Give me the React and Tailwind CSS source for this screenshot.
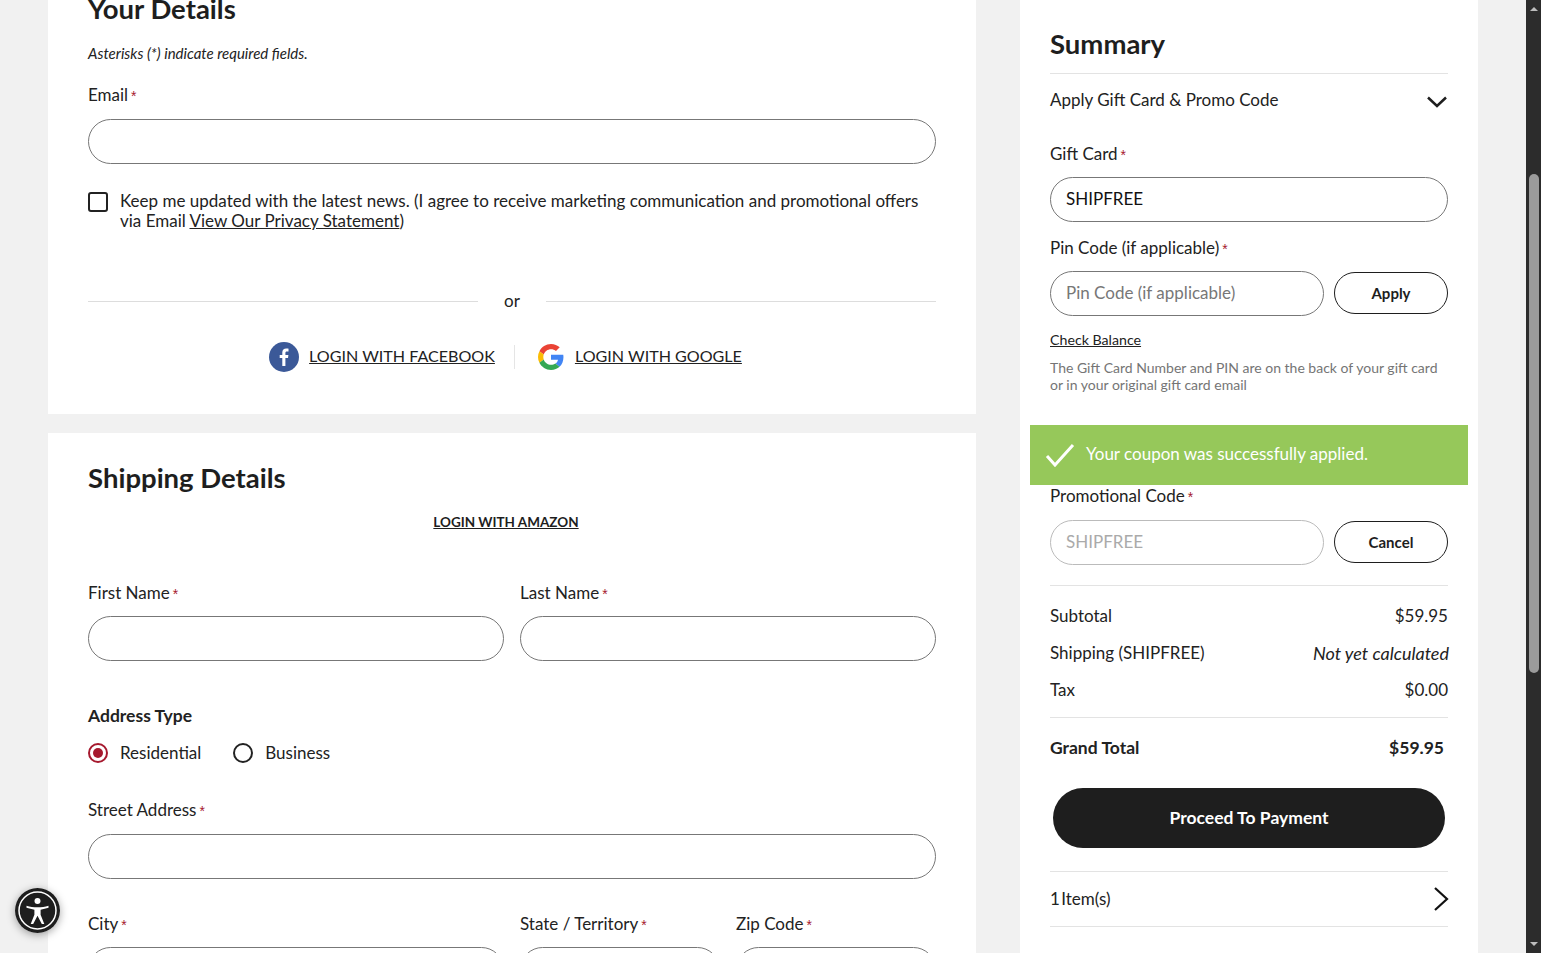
import React from 'react';

const Label = ({ children, className = '' }) => (
  <label className={`block h-6 text-[17px] leading-6 text-[#222] ${className}`}>
    {children}
    <span className="ml-[3px] font-['Liberation_Sans',sans-serif] text-[14px] text-[#a6192e]">*</span>
  </label>
);

const Input = ({ value = '', placeholder = '', className = '' }) => (
  <input
    readOnly
    value={value}
    placeholder={placeholder}
    className={`block h-[45px] w-full rounded-[23px] border border-[#777] bg-white px-[15px] pb-[2px] text-[17px] text-[#222] placeholder:text-[#777] outline-none ${className}`}
  />
);

const Row = ({ label, children, className = '' }) => (
  <div className={`flex h-[37px] items-center justify-between pb-px text-[17px] text-[#222] ${className}`}>
    <span>{label}</span>
    {children}
  </div>
);

const FacebookIcon = () => (
  <svg width="30" height="30" viewBox="0 0 30 30" className="shrink-0">
    <circle cx="15" cy="15" r="15" fill="#3b5998" />
    <path d="M16.4 24v-8h2.6l.4-3.1h-3v-1.900c0-.9.3-1.500 1.500-1.500h1.600V6.700c-.3 0-1.200-.1-2.300-.1-2.300 0-3.900 1.400-3.900 4v2.300h-2.600V16h2.600v8z" fill="#fff" />
  </svg>
);

const GoogleIcon = () => (
  <svg width="26" height="26" viewBox="0 0 48 48" className="shrink-0">
    <path fill="#EA4335" d="M24 9.500c3.500 0 6.700 1.200 9.200 3.600l6.900-6.900C35.900 2.400 30.500 0 24 0 14.600 0 6.500 5.400 2.600 13.200l8 6.200C12.500 13.600 17.800 9.500 24 9.500z" />
    <path fill="#4285F4" d="M47 24.500c0-1.600-.1-3.100-.4-4.500H24v9h12.900c-.6 3-2.200 5.500-4.800 7.200l7.700 6c4.500-4.200 7.200-10.300 7.200-17.700z" />
    <path fill="#FBBC05" d="M10.600 28.600c-.5-1.400-.8-3-.8-4.600s.3-3.200.8-4.600l-8-6.200C.9 16.500 0 20.100 0 24s.9 7.500 2.600 10.800l8-6.200z" />
    <path fill="#34A853" d="M24 48c6.500 0 11.900-2.100 15.800-5.800l-7.700-6c-2.100 1.400-4.900 2.300-8.100 2.300-6.200 0-11.500-4.100-13.400-9.900l-8 6.200C6.500 42.600 14.600 48 24 48z" />
  </svg>
);

const AccessibilityBadge = () => (
  <div className="absolute left-[15px] top-[888px] h-[45px] w-[45px] rounded-full shadow-[0_2px_8px_rgba(0,0,0,0.35)]">
    <svg width="45" height="45" viewBox="0 0 45 45">
      <circle cx="22.500" cy="22.500" r="22.500" fill="#1e1e1e" />
      <circle cx="22.500" cy="22.500" r="18.500" fill="none" stroke="#fff" strokeWidth="1.500" />
      <circle cx="22.500" cy="13" r="3" fill="#fff" />
      <path d="M11.500 17.800c3.500 1 7 1.500 11 1.500s7.500-.5 11-1.500v1.900l-7.900 2v5l3.700 9.300h-2.500l-4.300-8.300-4.300 8.300h-2.500l3.700-9.300v-5l-7.900-2z" fill="#fff" />
    </svg>
  </div>
);

const Scrollbar = () => (
  <div className="flex w-[15px] shrink-0 flex-col items-center bg-[#2c2c2c]">
    <div className="mt-[7px] h-0 w-0 border-x-[4px] border-b-[4px] border-x-transparent border-b-[#bdbdbd]" />
    <div className="mt-[163px] h-[499px] w-[10px] rounded-[5px] bg-[#9b9b9b]" />
    <div className="mt-[269px] h-0 w-0 border-x-[4px] border-t-[4px] border-x-transparent border-t-[#bdbdbd]" />
  </div>
);

const DetailsPanel = () => (
  <section className="h-[414px] overflow-hidden bg-white px-10">
    <h2 className="-mt-[9px] h-[36px] text-[27.5px] font-bold leading-[36px] text-[#1e1e1e]">Your Details</h2>
    <p className="mt-[16px] h-[20px] text-[15px] italic leading-[20px] text-[#222]">Asterisks (*) indicate required fields.</p>
    <Label className="mt-[20px]">Email</Label>
    <Input className="mt-[12px]" />
    <div className="mt-[27px] flex gap-3">
      <span className="mt-[1px] h-5 w-5 shrink-0 rounded-[3px] border-2 border-[#222]" />
      <p className="text-[17px] leading-5 text-[#222]">
        Keep me updated with the latest news. (I agree to receive marketing communication and promotional offers via Email <a className="underline">View Our Privacy Statement</a>)
      </p>
    </div>
    <div className="mt-[60px] flex h-5 items-center text-[17px] text-[#222]">
      <span className="h-px flex-1 bg-[#ddd]" />
      <span className="w-[68px] text-center">or</span>
      <span className="h-px flex-1 bg-[#ddd]" />
    </div>
    <div className="mt-[31px] flex h-[30px] items-center justify-center pr-[13px] text-[16.1px] text-[#222]">
      <FacebookIcon />
      <a className="mb-[2px] ml-[10px] underline">LOGIN WITH FACEBOOK</a>
      <span className="ml-[19px] mr-[23px] h-6 w-px bg-[#e5e5e5]" />
      <GoogleIcon />
      <a className="mb-[2px] ml-[11px] underline">LOGIN WITH GOOGLE</a>
    </div>
  </section>
);

const ShippingPanel = () => (
  <section className="mt-[19px] flex-1 overflow-hidden bg-white px-10">
    <h2 className="mt-[27px] h-[36px] text-[27.5px] font-bold leading-[36px] text-[#1e1e1e]">Shipping Details</h2>
    <div className="mt-[16px] h-5 pr-[12px] text-center text-[13.5px] font-bold leading-5 text-[#1e1e1e]">
      <a className="underline">LOGIN WITH AMAZON</a>
    </div>
    <div className="mt-[49px] grid grid-cols-2 gap-4">
      <div>
        <Label>First Name</Label>
        <Input className="mt-[11px]" />
      </div>
      <div>
        <Label>Last Name</Label>
        <Input className="mt-[11px]" />
      </div>
    </div>
    <h3 className="mt-[43px] h-6 text-[17.5px] font-bold leading-6 text-[#222]">Address Type</h3>
    <div className="mt-[13px] flex h-6 items-center text-[17px] text-[#222]">
      <span className="flex h-5 w-5 items-center justify-center rounded-full border-2 border-[#a6192e]">
        <span className="h-[10px] w-[10px] rounded-full bg-[#a6192e]" />
      </span>
      <span className="ml-3">Residential</span>
      <span className="ml-[32px] h-5 w-5 rounded-full border-2 border-[#222]" />
      <span className="ml-3">Business</span>
    </div>
    <Label className="mt-[33px]">Street Address</Label>
    <Input className="mt-[12px]" />
    <div className="mt-[33px] grid grid-cols-[416px_200px_200px] gap-4">
      <div>
        <Label>City</Label>
        <Input className="mt-[11px]" />
      </div>
      <div>
        <Label>State / Territory</Label>
        <Input className="mt-[11px]" />
      </div>
      <div>
        <Label>Zip Code</Label>
        <Input className="mt-[11px]" />
      </div>
    </div>
  </section>
);

const SummaryPanel = () => (
  <aside className="ml-[44px] w-[458px] shrink-0 bg-white px-[30px] pt-[26px]">
    <h2 className="h-[36px] text-[27.5px] font-bold leading-[36px] text-[#1e1e1e]">Summary</h2>
    <div className="mt-[11px] h-px bg-[#e3e3e3]" />
    <div className="mt-[14px] flex h-6 items-center justify-between text-[17px] text-[#222]">
      <span>Apply Gift Card &amp; Promo Code</span>
      <svg width="22" height="14" viewBox="0 0 22 14" className="mt-[4px]" fill="none" stroke="#1e1e1e" strokeWidth="2.500">
        <path d="M2 2.500l9 8.500 9-8.500" />
      </svg>
    </div>
    <Label className="mt-[30px]">Gift Card</Label>
    <Input value="SHIPFREE" className="mt-[11px] !text-[#111]" />
    <Label className="mt-[14px]">Pin Code (if applicable)</Label>
    <div className="mt-[11px] flex items-start gap-[10px]">
      <Input placeholder="Pin Code (if applicable)" className="!w-[274px]" />
      <button className="mt-px h-[42px] flex-1 rounded-[21px] border border-[#1e1e1e] bg-white text-[15px] font-bold text-[#1e1e1e]">Apply</button>
    </div>
    <a className="mt-[14px] block h-5 text-[14.2px] leading-5 text-[#222] underline">Check Balance</a>
    <p className="mt-[9px] text-[14px] leading-[17px] text-[#757575]">
      The Gift Card Number and PIN are on the back of your gift card or in your original gift card email
    </p>
    <div className="-mx-5 mt-[32px] flex h-[60px] items-center bg-[#96c85a] pl-[15px] text-[17px] text-white">
      <svg width="30" height="24" viewBox="0 0 30 24" fill="none" stroke="#fff" strokeWidth="3">
        <path d="M2 13l8 9L28 2" />
      </svg>
      <span className="mb-[2px] ml-[11px]">Your coupon was successfully applied.</span>
    </div>
    <Label className="-mt-px">Promotional Code</Label>
    <div className="mt-[12px] flex items-start gap-[10px]">
      <Input placeholder="SHIPFREE" className="!w-[274px] !border-[#bbb] placeholder:!text-[#aaa]" />
      <button className="mt-px h-[42px] flex-1 rounded-[21px] border border-[#1e1e1e] bg-white text-[15px] font-bold text-[#1e1e1e]">Cancel</button>
    </div>
    <div className="mt-[20px] h-px bg-[#e3e3e3]" />
    <Row label="Subtotal" className="mt-[12px]">
      <span>$59.95</span>
    </Row>
    <Row label="Shipping (SHIPFREE)">
      <span className="-mr-px text-[18px] italic">Not yet calculated</span>
    </Row>
    <Row label="Tax">
      <span>$0.00</span>
    </Row>
    <div className="mt-[8px] h-px bg-[#e3e3e3]" />
    <div className="mt-[18px] flex h-6 items-center justify-between pr-1 text-[17.5px] font-bold text-[#222]">
      <span>Grand Total</span>
      <span>$59.95</span>
    </div>
    <button className="mx-auto mt-[28px] block h-[60px] w-[392px] rounded-[30px] bg-[#1e1e1e] text-[17.5px] font-bold text-white">Proceed To Payment</button>
    <div className="mt-[23px] h-px bg-[#e3e3e3]" />
    <div className="flex h-[54px] items-center justify-between text-[17px] text-[#222]">
      <span className="[word-spacing:-3px]">1 Item(s)</span>
      <svg width="16" height="26" viewBox="0 0 16 26" fill="none" stroke="#111" strokeWidth="2.200" className="mr-[-1px]">
        <path d="M2 2l12 11L2 24" />
      </svg>
    </div>
    <div className="h-px bg-[#e3e3e3]" />
  </aside>
);

export default function App() {
  return (
    <div className="relative flex h-[953px] overflow-hidden bg-[#f1f1f1] font-['Lato','Liberation_Sans',sans-serif]">
      <div className="flex flex-1 px-12">
        <main className="flex w-[928px] shrink-0 flex-col">
          <DetailsPanel />
          <ShippingPanel />
        </main>
        <SummaryPanel />
      </div>
      <Scrollbar />
      <AccessibilityBadge />
    </div>
  );
}
